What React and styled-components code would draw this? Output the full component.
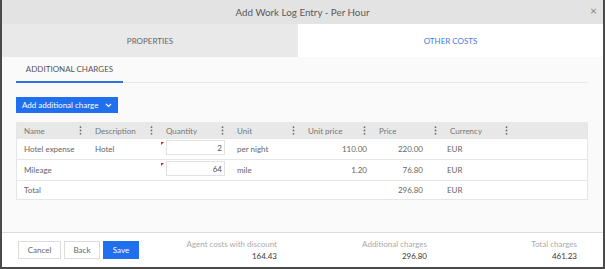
import React from 'react';
import styled, { createGlobalStyle } from 'styled-components';

const GlobalStyle = createGlobalStyle`
  html, body {
    margin: 0;
    padding: 0;
    background: #ffffff;
  }
  * {
    box-sizing: border-box;
  }
`;

const Window = styled.div`
  width: 605px;
  height: 269px;
  display: flex;
  flex-direction: column;
  background: #fafafa;
  border: 2px solid #4a4a4a;
  border-top: none;
  font-family: 'Lato', 'Open Sans', sans-serif;
  color: #666;
  overflow: hidden;
`;

const TitleBar = styled.div`
  position: relative;
  height: 24px;
  flex: none;
  display: flex;
  align-items: center;
  justify-content: center;
  background: #e3e3e3;
  font-size: 9.8px;
  color: #5a5a5a;
`;

const Close = styled.span`
  position: absolute;
  right: 6px;
  top: 5px;
  font-size: 12px;
  line-height: 12px;
  color: #888;
`;

const Tabs = styled.div`
  display: flex;
  height: 33px;
  flex: none;
`;

const Tab = styled.div`
  flex: ${p => (p.$active ? 1 : 'none')};
  width: ${p => (p.$active ? 'auto' : '296px')};
  display: flex;
  align-items: center;
  justify-content: center;
  font-size: 8px;
  background: ${p => (p.$active ? '#ffffff' : '#e9e9e9')};
  color: ${p => (p.$active ? '#3c7ee0' : '#666')};
`;

const Content = styled.div`
  flex: 1;
  padding: 0 15px 0 14px;
  background: #fafafa;
`;

const SubTabBar = styled.div`
  display: flex;
  height: 26px;
  border-bottom: 1px solid #e8e8e8;
`;

const SubTab = styled.div`
  width: 107px;
  display: flex;
  align-items: center;
  justify-content: center;
  font-size: 8px;
  color: #555;
  border-bottom: 2px solid #2f72dd;
  margin-bottom: -1px;
`;

const AddButton = styled.button`
  margin-top: 14px;
  height: 16px;
  width: 102px;
  display: flex;
  align-items: center;
  justify-content: space-between;
  padding: 0 6px 0 6px;
  border: none;
  background: #1f6fef;
  color: #fff;
  font-family: inherit;
  font-size: 8px;
  white-space: nowrap;
`;

const Table = styled.div`
  margin-top: 9px;
  border: 1px solid #e6e6e6;
  border-top: none;
  background: #fff;
`;

const Row = styled.div`
  display: grid;
  grid-template-columns: 71px 71px 71px 71px 71px 71px 71px 1fr;
  height: ${p => p.$h}px;
  background: ${p => (p.$head ? '#e8e8e8' : '#fff')};
  border-bottom: ${p => (p.$last || p.$head ? 'none' : '1px solid #e6e6e6')};
  font-size: 8px;
  color: ${p => (p.$head ? '#777' : '#666')};
`;

const Cell = styled.div`
  position: relative;
  display: flex;
  align-items: center;
  justify-content: ${p => (p.$right ? 'flex-end' : 'space-between')};
  padding: 0 ${p => p.$pr ?? 6}px 0 ${p => p.$pl ?? 7}px;
  white-space: nowrap;
`;

const QtyInput = styled.div`
  position: absolute;
  left: 7px;
  top: 1px;
  width: 59px;
  height: 15px;
  border: 1px solid #e2e2e2;
  background: #fff;
  display: flex;
  align-items: center;
  justify-content: flex-end;
  padding-right: 2px;
  color: #555;
`;

const Marker = styled.span`
  position: absolute;
  left: 2px;
  top: 3px;
  width: 0;
  height: 0;
  border-top: 3px solid #d42020;
  border-right: 3px solid transparent;
`;

const Footer = styled.div`
  height: 35px;
  flex: none;
  display: flex;
  align-items: center;
  padding: 0 26px 0 16px;
  background: #fff;
  border-top: 1px solid #dcdcdc;
`;

const Buttons = styled.div`
  display: flex;
  gap: 3px;
  flex: 1;
  min-width: 0;
`;

const FooterButton = styled.button`
  flex: none;
  height: 18px;
  width: ${p => p.$w}px;
  border: 1px solid ${p => (p.$primary ? '#1f6fef' : '#dcdcdc')};
  background: ${p => (p.$primary ? '#1f6fef' : '#fff')};
  color: ${p => (p.$primary ? '#fff' : '#666')};
  font-family: inherit;
  font-size: 8px;
  padding: 0;
`;

const Summary = styled.div`
  flex: none;
  width: 150px;
  display: flex;
  flex-direction: column;
  align-items: flex-end;
  line-height: 12px;
`;

const SummaryLabel = styled.span`
  font-size: 8px;
  color: #aaa;
`;

const SummaryValue = styled.span`
  font-size: 8px;
  color: #3a3a3a;
`;

const Dots = () => (
  <svg width="3" height="9" viewBox="0 0 3 9">
    <circle cx="1.5" cy="1.2" r="0.9" fill="#6d6d6d" />
    <circle cx="1.5" cy="4.5" r="0.9" fill="#6d6d6d" />
    <circle cx="1.5" cy="7.8" r="0.9" fill="#6d6d6d" />
  </svg>
);

const Chevron = () => (
  <svg width="7" height="5" viewBox="0 0 7 5">
    <path d="M1 1l2.5 2.5L6 1" stroke="#fff" strokeWidth="1.2" fill="none" />
  </svg>
);

const headers = ['Name', 'Description', 'Quantity', 'Unit', 'Unit price', 'Price', 'Currency'];

const rows = [
  { name: 'Hotel expense', desc: 'Hotel', qty: '2', unit: 'per night', unitPrice: '110.00', price: '220.00', cur: 'EUR' },
  { name: 'Mileage', desc: '', qty: '64', unit: 'mile', unitPrice: '1.20', price: '76.80', cur: 'EUR' },
];

export default function App() {
  return (
    <>
      <GlobalStyle />
      <Window>
        <TitleBar>
          Add Work Log Entry - Per Hour
          <Close>×</Close>
        </TitleBar>
        <Tabs>
          <Tab>PROPERTIES</Tab>
          <Tab $active>OTHER COSTS</Tab>
        </Tabs>
        <Content>
          <SubTabBar>
            <SubTab>ADDITIONAL CHARGES</SubTab>
          </SubTabBar>
          <AddButton>
            Add additional charge
            <Chevron />
          </AddButton>
          <Table>
            <Row $head $h={17}>
              {headers.map(h => (
                <Cell key={h}>
                  {h}
                  <Dots />
                </Cell>
              ))}
              <Cell />
            </Row>
            {rows.map(r => (
              <Row key={r.name} $h={21}>
                <Cell>{r.name}</Cell>
                <Cell>{r.desc}</Cell>
                <Cell>
                  <Marker />
                  <QtyInput>{r.qty}</QtyInput>
                </Cell>
                <Cell>{r.unit}</Cell>
                <Cell $right $pr={5}>{r.unitPrice}</Cell>
                <Cell $right $pr={20}>{r.price}</Cell>
                <Cell $pr={0} $pl={4}>{r.cur}</Cell>
                <Cell />
              </Row>
            ))}
            <Row $last $h={18}>
              <Cell>Total</Cell>
              <Cell />
              <Cell />
              <Cell />
              <Cell />
              <Cell $right $pr={20}>296.80</Cell>
              <Cell $pr={0} $pl={4}>EUR</Cell>
              <Cell />
            </Row>
          </Table>
        </Content>
        <Footer>
          <Buttons>
            <FooterButton $w={43}>Cancel</FooterButton>
            <FooterButton $w={36}>Back</FooterButton>
            <FooterButton $w={36} $primary>Save</FooterButton>
          </Buttons>
          <Summary>
            <SummaryLabel>Agent costs with discount</SummaryLabel>
            <SummaryValue>164.43</SummaryValue>
          </Summary>
          <Summary>
            <SummaryLabel>Additional charges</SummaryLabel>
            <SummaryValue>296.80</SummaryValue>
          </Summary>
          <Summary>
            <SummaryLabel>Total charges</SummaryLabel>
            <SummaryValue>461.23</SummaryValue>
          </Summary>
        </Footer>
      </Window>
    </>
  );
}
